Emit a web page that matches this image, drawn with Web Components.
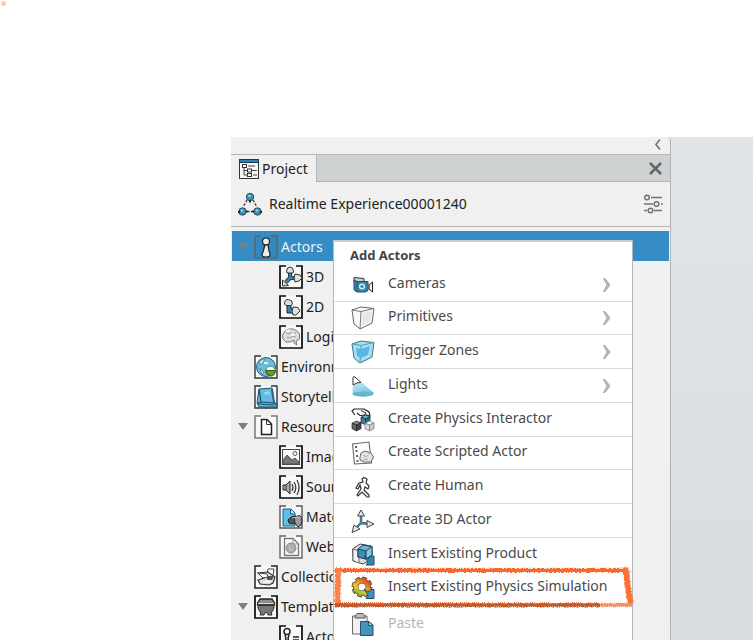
<!DOCTYPE html>
<html lang="en">
<head>
<meta charset="utf-8">
<title>Project</title>
<style>
html,body{margin:0;height:100%;overflow:hidden;background:#fff}
body{font-family:"Noto Sans","Open Sans",sans-serif;font-size:14px;line-height:20px;color:#222}
</style>
</head>
<body>
<app-window></app-window>
<script>
const frame = (c, w) => `<path d="M7 1H1V23H23V1H17" fill="#f8f8f8" stroke="none"/><path d="M7 1H1V23H23V1H17" fill="none" stroke="${c}" stroke-width="${w}"/>`;
const cube = (x, y, s, a, b, c) => `<g transform="translate(${x} ${y}) scale(${s})" stroke-width=".8" stroke-linejoin="round"><path d="M0 2.5L5 0L10 2L5 4.5Z" fill="${a}"/><path d="M0 2.5L5 4.5V11L0 8.5Z" fill="${b}"/><path d="M5 4.5L10 2V8.5L5 11Z" fill="${c}"/></g>`;
const icons = {
project: `<rect x="2.500" y="2.500" width="19" height="19" fill="#f7f7f7" stroke="#333"/><path d="M2 2H22V6H2Z" fill="#173b52"/><path d="M3 4H21" stroke="#3697cd" stroke-width="1.500"/><path d="M7 10V18H11M7 13.500H11M11 9H18M15 13.500H20M16 18H20" fill="none" stroke="#444"/><g fill="#fff" stroke="#333"><rect x="5.500" y="7.500" width="4" height="3"/><rect x="10.500" y="12" width="4" height="3"/><rect x="10.500" y="16.500" width="4" height="3"/></g>`,
atom: `<g stroke="#333" stroke-width="1.300"><path d="M9 8L5 15M15 8L19 15M9 19.500H15" stroke-dasharray="2.500 1.500"/></g><g fill="#3f8db3" stroke="#235168"><circle cx="12" cy="5" r="3.700"/><circle cx="4.500" cy="19.500" r="3.700"/><circle cx="19.500" cy="19.500" r="3.700"/></g><g fill="#9ccfe3"><circle cx="11.500" cy="4" r="1.300"/><circle cx="4" cy="18.500" r="1.300"/><circle cx="19" cy="18.500" r="1.300"/></g><path d="M8 19.500H9.500M14.500 19.500H16M0 20H2M22 20H24M11 9.500H13" stroke="#222" stroke-width="2"/>`,
settings: `<g fill="none" stroke="#707274" stroke-width="1.500"><circle cx="6" cy="5.500" r="2.300"/><path d="M10 5.500H21M3 12H12M20 12H22M3 18.500H6M13 18.500H21"/><circle cx="15.500" cy="12" r="2.300"/><circle cx="9.500" cy="18.500" r="2.300"/></g>`,
close: `<path d="M6 6L17 17M17 6L6 17" stroke="#66696b" stroke-width="2.600"/>`,
back: `<path d="M14 5.500L10 10.500L14 15.500" fill="none" stroke="#77797b" stroke-width="1.800"/>`,
next: `<path d="M9.500 5.500H11L16 12L11 18.500H9.500L13 12Z" fill="#b2b7ba" stroke="#a4a9ad" stroke-width=".9"/>`,
actor: `<path d="M7 1H1V23H23V1H17" fill="#318abf"/><path d="M7 1H1V23H23V1H17" fill="none" stroke="#5f666b" stroke-width="1.500"/><path d="M11 9.500Q9 18 8 19Q7.500 22 12 22Q16.500 22 16 19Q14.500 15 14 9.500" fill="#ececec" stroke="#222" stroke-width="1.200"/><circle cx="12" cy="6.500" r="3.500" fill="#eee" stroke="#222" stroke-width="1.200"/><path d="M9.500 10H14.500" stroke="#222"/>`,
tree3d: frame('#0a0a0a',1.7)+`<path d="M11 13V7M11 13L18 13M11 13L7 17" stroke="#222" stroke-width="4"/><path d="M11 14V7M11 13L18 13M11 13L7 17" stroke="#3787ae" stroke-width="2.500"/><g fill="#dedede" stroke="#333"><path d="M7.500 6Q8 2 11 2T14.500 6L14 8H8Z"/><path d="M16 9L21 10L23 13L20 16L16 17L15 13Z"/><path d="M3.500 21V15L9.500 20.500Z"/></g>`,
tree2d: frame('#0a0a0a',1.700)+`<path d="M8 8V18H15V14H12V8Z" fill="#3685aa" stroke="#222"/><g fill="#dedede" stroke="#333"><path d="M5.500 9Q5.500 4 9.500 4.500T13.500 9L12 10.500H7Z"/><path d="M14 12L19 12.500L21 16L17 20H14L13 16Z"/></g>`,
logic: frame('#0a0a0a',1.700)+`<path d="M4 14L3.500 10L6 6L10 4L14 4L18 6L20.500 9V14L17 16L18 20L15 18V15L11 17L7 17Z" fill="#dedede" stroke="#777"/><path d="M7 8L10 9L13 7M8 12L11 13L14 11L17 12M15 7L17 9" fill="none" stroke="#999"/><path d="M7 6L11 5M12 10H15" stroke="#fff" stroke-width="1.500"/>`,
environment: frame('#333',1.400)+`<circle cx="12" cy="12" r="9.500" fill="#6bbce1" stroke="#225c76"/><path d="M5 8Q8 3 11 4L8 9H5ZM6 13L10 17L8 20Z" fill="#c9e9f1" stroke="#4b7280" stroke-width=".7"/><path d="M10 8H14" stroke="#fff" stroke-width="1.500"/><circle cx="16.500" cy="16" r="4.800" fill="#f4faf4" stroke="#586"/><path d="M11.500 15.500H21.500Q21 21 16.500 21Q12 20 11.500 15.500Z" fill="#5b9e29" stroke="#31631b"/>`,
story: frame('#333',1.400)+`<path d="M5 4L18 3L20 17L23 19V22H5L3 18Z" fill="#67b9dd" stroke="#185673"/><path d="M5 4L7 17L20 18M4 19L20 20M7 17L4 18" fill="none" stroke="#184f6c" stroke-width="1.200"/><path d="M18 4L20 18L23 20" fill="none" stroke="#2b6887" stroke-width="2"/><path d="M10 7L15 6L16 9L11 10Z" fill="#94d4ed"/>`,
resource: frame('#777',1.500)+`<path d="M7.500 4.500H13L17.500 9V19.500H7.500Z" fill="#fff" stroke="#222" stroke-width="1.500"/><path d="M12.500 5V9.500H17" fill="none" stroke="#333"/>`,
image: frame('#0a0a0a',1.700)+`<rect x="3.500" y="4.500" width="17" height="15" fill="#fafafa" stroke="#444"/><path d="M4 15L8 10L13 15L16 13L20 17V19H4Z" fill="#777" stroke="#555"/><circle cx="16" cy="8.500" r="2" fill="#fff" stroke="#555"/>`,
sound: frame('#0a0a0a',1.700)+`<path d="M4 10H7L11 6V19L7 15H4Z" fill="#aaa" stroke="#222"/><path d="M7 10V15" stroke="#333"/><path d="M13 9Q15 12.500 13 16M15 7Q18.500 12.500 15 18M18 5Q22 12.500 18 20" fill="none" stroke="#444" stroke-width="1.300"/>`,
material: frame('#555',1.400)+`<path d="M4 4H12L16 8V21H4Z" fill="#60bde5" stroke="#1f6384"/><path d="M11.500 4V9H16" fill="#c0e7f4" stroke="#1f6384"/><path d="M9 15L12 12L17 11L18 17L14 19L10 18Z" fill="#555" stroke="#222"/><path d="M15 12L21 10.500L23 15L22 20L19 22L16 18Z" fill="#999" stroke="#222"/><path d="M13 13L19 12L22 13" stroke="#ccc" fill="none"/>`,
web: frame('#666',1.400)+`<path d="M5.500 3.500H14L19.500 9V20.500H5.500Z" fill="#fafafa" stroke="#777" stroke-width="1.300"/><path d="M14 4V9H19" fill="none" stroke="#999"/><circle cx="12" cy="13" r="5" fill="#b2b2b2" stroke="#888"/><path d="M9 11L13 10L15 14L12 17L9 15ZM9 13H15M12 10V17" fill="#ccc" stroke="#999" stroke-width=".7"/>`,
collection: frame('#222',1.500)+`<path d="M14 4H20L19 11L13 9Z" fill="#fff" stroke="#444"/><path d="M4 8L14 7L21 12L19 18L15 20L6 19L4 15L10 13Z" fill="#ddd" stroke="#333" stroke-width="1.200"/><path d="M4 8L13 9L14 12L9 13Z" fill="#fff" stroke="#444"/><path d="M13 11H20L18 15H13Z" fill="#4c5558"/><path d="M12 15H17L16 18L8 18Z" fill="#eef3f5"/>`,
template: frame('#0a0a0a',1.700)+`<path d="M3.500 8L6 4H18L20.500 8V10H3.500Z" fill="#8c8c8c" stroke="#222" stroke-width="1.300"/><path d="M4 10.500H20V13L18 17H17L18 20H14L13 17.500H11L10 20H6L7 17H6L4 13Z" fill="#777" stroke="#333"/><path d="M4 8.500H20" stroke="#ddd"/>`,
actors2: frame('#0a0a0a',1.700)+`<circle cx="8" cy="6.500" r="3" fill="#fff" stroke="#222" stroke-width="1.500"/><path d="M6 9.500L7 14L4.500 20H11L9 14L10 9.500M14 12H20M14 15H20" fill="none" stroke="#222" stroke-width="1.500"/>`,
camera: `<path d="M3 9V4.500L13 5.500V10Z" fill="#c8cdd0" stroke="#333"/><path d="M3 7L6 8.500H17V17.500L14.500 19H6L3 17Z" fill="#3585ad" stroke="#1e5069"/><path d="M6 8.500V19" fill="none" stroke="#215774"/><circle cx="11" cy="13.500" r="2.400" fill="#3e91b9" stroke="#e4eef2" stroke-width="1.300"/><path d="M18 12L21.500 9V19L18 16Z" fill="#eee" stroke="#222"/>`,
primitive: `<path d="M1 4L10 1L23 2.500L21 17L9 23L3 18Z" fill="#fafafa" stroke="#666"/><path d="M1 4L10 5.500L23 2.500M10 5.500L9 23" fill="none" stroke="#777"/><path d="M11 7L21 5L19 16L10.500 20Z" fill="#e6e6e6"/>`,
trigger: `<path d="M1 4L10 1L23 2.500L21 17L9 23L3 18Z" fill="#a3e0f4" stroke="#41707f"/><path d="M1 4L10 5.500L23 2.500M10 5.500L9 23" fill="none" stroke="#559bb3"/><path d="M5 8L10 9L19 6L17 15L10 18L6 16Z" fill="#5ab6de"/>`,
light: `<defs><linearGradient id="lg" x1=".1" x2=".6" y2="1"><stop stop-color="#c4edf9"/><stop offset="1" stop-color="#6bbbd9"/></linearGradient></defs><path d="M2 11L10 8L23 19Q22 22.500 12 22.500Q2 22.500 1.500 20Z" fill="url(#lg)"/><ellipse cx="12" cy="20" rx="10.500" ry="2.500" fill="#65b4d2"/><path d="M2 4Q2 2 4 3L10 8.500Q6 8 2 11Z" fill="#fff" stroke="#333"/>`,
physics: `<path d="M4 7L1 3L3 1H13L18 4L19 8L15 7L9 7.500L6 5" fill="#fff" stroke="#222" stroke-width="1.200"/><path d="M10 2.500L15 5L13 8" fill="none" stroke="#222"/><g stroke="#222">${cube(10,7,.9,'#66b3d5','#3584ab','#2a6d90')}${cube(1,13,.9,'#888','#666','#444')}</g><g stroke="#777">${cube(14,13,.9,'#fff','#ddd','#ccc')}</g>`,
script: `<path d="M1.500 3L18 1L20.500 22L3.500 23Z" fill="#fff" stroke="#666" stroke-width="1.100"/><path d="M4 6H6M4.500 10H6.500M5 15H7M5.500 20H7.500" stroke="#333" stroke-width="1.500"/><path d="M9 16L10 12L14 10L20 12L22.500 16L20 21L13 21L9 19Z" fill="#e4e4e4" stroke="#666"/><path d="M12 14L15 16L18 13M12 19L17 18" fill="none" stroke="#aaa"/>`,
human: `<path d="M11 4L13 2.500L16 4L15 8L18 11L17 14L14 12L13 15L18 20V22H16L11 17L7 21L6 20L10 14L9 10L7 14L5 13L8 8L12 7Z" fill="#fff" stroke="#333" stroke-width="1.200"/>`,
actor3d: `<path d="M10 14V5M10 14L19 15M10 14L4 20" stroke="#25485a" stroke-width="2.400"/><path d="M10 14V5M10 14L19 15M10 14L4 20" stroke="#5597b2" stroke-width="1.200"/><g fill="#e5e5e5" stroke="#444"><path d="M10 1L13.500 7H6.500Z"/><path d="M16 11.500L23 15L16 18.500Z"/><path d="M3 16L9 20L1 23.500Z"/></g>`,
product: `<path d="M1.500 6L9 1L20 3V16L12 21L2 18Z" fill="#ddd" stroke="#444"/><path d="M2 6L8 8V20L2 17.500Z" fill="#f4f4f4" stroke="#777"/><path d="M7 6L12 2L21 3.500V12L15 16L7 14Z" fill="#69b5d7" stroke="#153e53"/><path d="M7 6L15 8V16L7 14Z" fill="#408fb8" stroke="#245"/><path d="M15 8L21 3.500V12L15 16Z" fill="#89c9e2" stroke="#245"/><path d="M13 13L17 16L20 13H23V22H15L17 19Z" fill="#3587b0" stroke="#17516e"/>`,
simulation: `<defs><linearGradient id="sg" gradientUnits="userSpaceOnUse" x1="17" y1="2" x2="4" y2="20"><stop stop-color="#d93425"/><stop offset=".45" stop-color="#f2a02a"/><stop offset=".65" stop-color="#dfd229"/><stop offset="1" stop-color="#3a9a35"/></linearGradient></defs><g fill="none"><circle cx="11" cy="11" r="8.200" stroke="#6b4327" stroke-width="4.600" stroke-dasharray="4.200 2.240"/><circle cx="11" cy="11" r="6.300" stroke="#6b4327" stroke-width="5.400"/><circle cx="11" cy="11" r="8" stroke="url(#sg)" stroke-width="3.200" stroke-dasharray="2.900 3.383" stroke-dashoffset="-.6"/><circle cx="11" cy="11" r="6.200" stroke="url(#sg)" stroke-width="3.800"/></g><path d="M13 13L17 16L20 13.500H23V22.500H15L17 19.500Z" fill="#3f8fb7" stroke="#20556f"/>`,
paste: `<path d="M1.500 3H16V21H1.500Z" fill="#f1f1f1" stroke="#666"/><path d="M4 3L6 .5H12L14 3V5H4Z" fill="#bbb" stroke="#555"/><path d="M9.500 8.500H18L22 12V22.500H9.500Z" fill="#4593bb" stroke="#23536d"/><path d="M17.500 9V12.500H21.500" fill="#a9dbeb" stroke="#23536d"/>`
};
const define = (name, render) => customElements.define(name, class extends HTMLElement {
  constructor(){super();this.attachShadow({mode:'open'});}
  connectedCallback(){this.shadowRoot.innerHTML = render(this);}
});
define('ui-icon', el => `<style>:host{display:block;flex:none;width:24px;height:24px}svg{display:block;width:100%;height:100%}</style><svg viewBox="0 0 24 24" fill="none" aria-hidden="true">${icons[el.getAttribute('name')]}</svg>`);

define('tree-item', el => `<style>
:host{display:flex;align-items:center;height:30px;padding-left:${el.hasAttribute('child')?25:0}px}
:host([selected]){background:#368dc4;color:#e9f4fa}
.twist{width:22px;height:30px;flex:none;display:grid;place-items:center;padding:0;border:0;background:none;box-sizing:border-box}
.twist i{border:5px solid transparent;border-top:7px solid #7c7f82;border-bottom:0}
.item{display:flex;align-items:center;gap:3px;padding:2px 0 0;border:0;background:none;font:inherit;color:inherit;white-space:nowrap}
</style>${el.hasAttribute('open')?'<button class="twist" aria-label="Collapse"><i></i></button>':'<span class="twist"></span>'}<button class="item"><ui-icon name="${el.getAttribute('icon')}"></ui-icon><slot></slot></button>`);

define('menu-item', el => `<style>
:host{display:block;position:relative;box-sizing:border-box;height:var(--row-height,34px);border-bottom:1px solid #dadcdd}
button{display:flex;align-items:center;width:100%;height:100%;padding:0 14px 0 17px;border:0;background:none;font:inherit;color:#4a4a4a;text-align:left;white-space:nowrap}
button:disabled{color:#b5b5b5}
.label{flex:1;margin-left:13px;padding-bottom:4px}
:host([last]){border:0}
</style><button role="menuitem" ${el.hasAttribute('disabled')?'disabled':''}><ui-icon name="${el.getAttribute('icon')}"></ui-icon><span class="label"><slot></slot></span>${el.hasAttribute('submenu')?'<ui-icon name="next"></ui-icon>':''}</button><slot name="mark"></slot>`);

define('crayon-frame', () => `<style>:host{position:absolute;inset:-6px 0 -4px 0;pointer-events:none}svg{display:block;width:100%;height:100%;overflow:visible}</style>
<svg viewBox="0 0 298 43" preserveAspectRatio="none" fill="none" aria-hidden="true"><defs><filter id="rough" x="-5%" y="-20%" width="110%" height="140%"><feTurbulence baseFrequency=".5" numOctaves="2" seed="4"/><feDisplacementMap in="SourceGraphic" scale="1.500"/></filter></defs><g filter="url(#rough)"><path d="M0 4H292" stroke="#f9682c" stroke-width="4.500"/><path d="M4 1L3 39" stroke="#fa8148" stroke-width="6"/><path d="M291 1L296 38" stroke="#f97338" stroke-width="6"/><path d="M264 39.500H298" stroke="#f78f61" stroke-width="3.500"/><path d="M0 39.500H265" stroke="#c05a2a" stroke-width="4"/><path d="M0 37.500H264" stroke="#e9743f" stroke-width="1"/></g></svg>`);

define('actor-menu', () => `<style>
:host{display:block;box-sizing:border-box;background:#fff;border:1px solid #b4b8ba;border-top:2px solid #c8cccd}
h2{margin:0;padding:3px 16px;font-size:13px;line-height:20px;font-weight:700;color:#444}
menu-item:nth-of-type(4n+2){--row-height:33px}
menu-item[last]{--row-height:40px}
</style><div role="menu" aria-label="Add Actors"><h2>Add Actors</h2>
<menu-item icon="camera" submenu>Cameras</menu-item>
<menu-item icon="primitive" submenu>Primitives</menu-item>
<menu-item icon="trigger" submenu>Trigger Zones</menu-item>
<menu-item icon="light" submenu>Lights</menu-item>
<menu-item icon="physics">Create Physics Interactor</menu-item>
<menu-item icon="script">Create Scripted Actor</menu-item>
<menu-item icon="human">Create Human</menu-item>
<menu-item icon="actor3d">Create 3D Actor</menu-item>
<menu-item icon="product">Insert Existing Product</menu-item>
<menu-item icon="simulation">Insert Existing Physics Simulation<crayon-frame slot="mark"></crayon-frame></menu-item>
<menu-item icon="paste" disabled last>Paste</menu-item></div>`);

define('project-panel', () => `<style>
:host{display:flex;flex-direction:column;position:relative;background:#f0f0f0;border-right:1px solid #b1b4b7;border-top-right-radius:4px;min-width:0}
button{border:0;padding:0;background:none;font:inherit;color:inherit}
.strip{display:flex;justify-content:flex-end;align-items:center;flex:none;height:17px;overflow:hidden;border-bottom:1px solid #b5b8ba}
.tabs{display:flex;justify-content:space-between;align-items:stretch;flex:none;height:27px;background:#ced2d3;box-shadow:inset 0 -1px #b1b5b7}
.tab{display:flex;align-items:center;gap:1px;padding:0 8px 0 6px;background:#f0f0f0;border-right:1px solid #b1b5b7}
.close{padding-right:2px}
header{display:flex;align-items:center;flex:none;gap:7px;height:45px;padding:0 5px 0 7px;box-sizing:border-box;border-bottom:1px solid #b7babc}
h1{flex:1;margin:0;font-size:14px;font-weight:400;line-height:20px;white-space:nowrap}
nav{padding:4px 1px 0}
actor-menu{position:absolute;left:102px;top:103px;width:300px}
</style>
<div class="strip"><button aria-label="Collapse panel"><ui-icon name="back"></ui-icon></button></div>
<div class="tabs"><button class="tab"><ui-icon name="project"></ui-icon>Project</button><button class="close" aria-label="Close"><ui-icon name="close"></ui-icon></button></div>
<header><ui-icon name="atom"></ui-icon><h1>Realtime Experience00001240</h1><button aria-label="Settings"><ui-icon name="settings"></ui-icon></button></header>
<nav aria-label="Project tree">
<tree-item icon="actor" open selected>Actors</tree-item>
<tree-item icon="tree3d" child>3D</tree-item>
<tree-item icon="tree2d" child>2D</tree-item>
<tree-item icon="logic" child>Logic</tree-item>
<tree-item icon="environment">Environments</tree-item>
<tree-item icon="story">Storytelling</tree-item>
<tree-item icon="resource" open>Resources</tree-item>
<tree-item icon="image" child>Images</tree-item>
<tree-item icon="sound" child>Sounds</tree-item>
<tree-item icon="material" child>Materials</tree-item>
<tree-item icon="web" child>Web</tree-item>
<tree-item icon="collection">Collections</tree-item>
<tree-item icon="template" open>Templates</tree-item>
<tree-item icon="actors2" child>Actors</tree-item>
</nav><actor-menu></actor-menu>`);

define('app-window', () => `<style>
:host{display:block;position:relative;box-sizing:border-box;height:100vh;padding:137px 0 0 231px;overflow:hidden}
.work{display:grid;grid-template-columns:minmax(0,440fr) minmax(0,82fr);height:100%;background:linear-gradient(#e1e5e8,#d7dce0)}
.dot{position:absolute;left:1px;top:1px;width:5px;height:5px;border-radius:50%;background:#f8c9ae}
</style><span class="dot"></span><div class="work"><project-panel></project-panel><main aria-label="Scene"></main></div>`);
</script>
</body>
</html>
